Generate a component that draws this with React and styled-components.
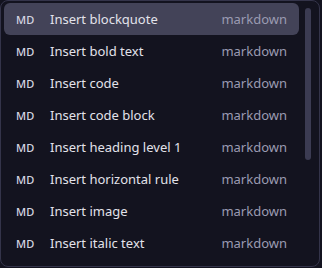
import React from 'react';
import styled, { createGlobalStyle } from 'styled-components';

const GlobalStyle = createGlobalStyle`
  html, body {
    margin: 0;
    padding: 0;
    background: #13131f;
  }
  body {
    font-family: "Noto Sans", "DejaVu Sans", sans-serif;
  }
`;

const Panel = styled.div`
  display: flex;
  width: 320px;
  height: 267px;
  box-sizing: border-box;
  border: 1px solid #34344a;
  border-radius: 8px;
  background: #13131f;
  overflow: hidden;
`;

const List = styled.ul`
  flex: 1;
  list-style: none;
  margin: 0;
  padding: 2px 6px 0 3px;
  overflow: hidden;
`;

const Rail = styled.div`
  width: 14px;
  flex: none;
  padding: 7px 0;
  box-sizing: border-box;
`;

const Thumb = styled.div`
  width: 6px;
  border-radius: 3px;
  background: #3b3b52;
`;

const Row = styled.li`
  display: flex;
  align-items: center;
  height: 32px;
  padding: 0 12px;
  border-radius: 6px;
  background: ${(p) => (p.$active ? '#434358' : 'transparent')};
  font-size: 13px;
`;

const Tag = styled.span`
  width: 34px;
  flex: none;
  font-size: 11px;
  font-weight: 500;
  letter-spacing: 0.2px;
  color: #d6d6e2;
`;

const Label = styled.span`
  flex: 1;
  color: #e2e2ea;
  white-space: nowrap;
`;

const Source = styled.span`
  color: #9b9bb2;
`;

const commands = [
  'Insert blockquote',
  'Insert bold text',
  'Insert code',
  'Insert code block',
  'Insert heading level 1',
  'Insert horizontal rule',
  'Insert image',
  'Insert italic text',
];

const visibleFraction = 0.6;

export default function App() {
  return (
    <>
      <GlobalStyle />
      <Panel>
        <List>
          {commands.map((c, i) => (
            <Row key={c} $active={i === 0}>
              <Tag>MD</Tag>
              <Label>{c}</Label>
              <Source>markdown</Source>
            </Row>
          ))}
        </List>
        <Rail>
          <Thumb style={{ height: `${Math.round(253 * visibleFraction)}px` }} />
        </Rail>
      </Panel>
    </>
  );
}
